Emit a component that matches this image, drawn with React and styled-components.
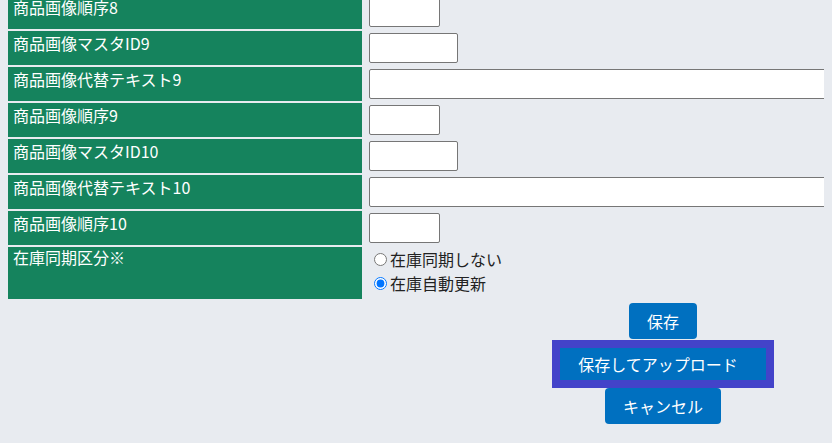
import React from "react";
import styled, { createGlobalStyle } from "styled-components";

const GlobalStyle = createGlobalStyle`
  html {
    overflow: hidden;
    background: #e8ebf0;
  }
  body {
    margin: 0 8px;
    font-family: "Noto Sans CJK JP", "Noto Sans", sans-serif;
    color: #222;
  }
`;

const StyledForm = styled("div")`
  margin-top: -5px;
  width: 954px;
`;

const StyledTable = styled("div")`
  display: grid;
  grid-template-columns: 354px 598px;
  gap: 2px;
`;

const StyledLabel = styled("div")`
  background-color: #15835d;
  color: #ffffff;
  font-size: 16px;
  line-height: ${(p) => (p.$tall ? "20px" : "24px")};
  padding: 0 5px 2px;
`;

const StyledField = styled("div")`
  padding: ${(p) => (p.$radios ? "0 5px 4px" : "2px 5px")};
  min-height: 30px;
`;

const StyledInput = styled("input")`
  display: block;
  box-sizing: border-box;
  width: ${(p) => p.$w}px;
  height: 30px;
  margin: 0;
  background: #ffffff;
  border: 1px solid #767676;
  border-radius: 2px;
  padding: 1px 2px;
`;

const StyledOption = styled("label")`
  display: flex;
  align-items: center;
  font-size: 16px;
  line-height: 24px;
  color: #222;
`;

const StyledRadio = styled("input")`
  width: 13px;
  height: 13px;
  margin: 0 3px 0 5px;
`;

const StyledActions = styled("div")`
  margin-left: 356px;
  width: 598px;
  padding-top: 4px;
  display: flex;
  flex-direction: column;
  align-items: center;
`;

const StyledButton = styled("button")`
  height: ${(p) => (p.$focused ? "32px" : "36px")};
  padding: ${(p) => (p.$focused ? "0 28px 0 18px" : "0 18px")};
  margin: ${(p) => (p.$focused ? "9px 0 8px" : "0")};
  background-color: #0070c0;
  color: #ffffff;
  border: none;
  border-radius: ${(p) => (p.$focused ? "0" : "4px")};
  outline: ${(p) => (p.$focused ? "8px solid #4343c9" : "none")};
  font-family: "Noto Sans CJK JP", "Noto Sans", sans-serif;
  font-size: 16px;
  line-height: 24px;
  cursor: pointer;
`;

const rows = [
  { label: "商品画像順序8", w: 71 },
  { label: "商品画像マスタID9", w: 89 },
  { label: "商品画像代替テキスト9", w: 588 },
  { label: "商品画像順序9", w: 71 },
  { label: "商品画像マスタID10", w: 89 },
  { label: "商品画像代替テキスト10", w: 588 },
  { label: "商品画像順序10", w: 71 },
];

const App = () => {
  return (
    <>
      <GlobalStyle />
      <StyledForm>
        <StyledTable>
          {rows.map((r) => (
            <React.Fragment key={r.label}>
              <StyledLabel>{r.label}</StyledLabel>
              <StyledField>
                <StyledInput type="text" $w={r.w} />
              </StyledField>
            </React.Fragment>
          ))}
          <StyledLabel $tall>在庫同期区分※</StyledLabel>
          <StyledField $radios>
            <StyledOption>
              <StyledRadio type="radio" name="sync" value="0" />
              在庫同期しない
            </StyledOption>
            <StyledOption>
              <StyledRadio type="radio" name="sync" value="1" defaultChecked />
              在庫自動更新
            </StyledOption>
          </StyledField>
        </StyledTable>
        <StyledActions>
          <StyledButton>保存</StyledButton>
          <StyledButton $focused>保存してアップロード</StyledButton>
          <StyledButton>キャンセル</StyledButton>
        </StyledActions>
      </StyledForm>
    </>
  );
};

export default App;
